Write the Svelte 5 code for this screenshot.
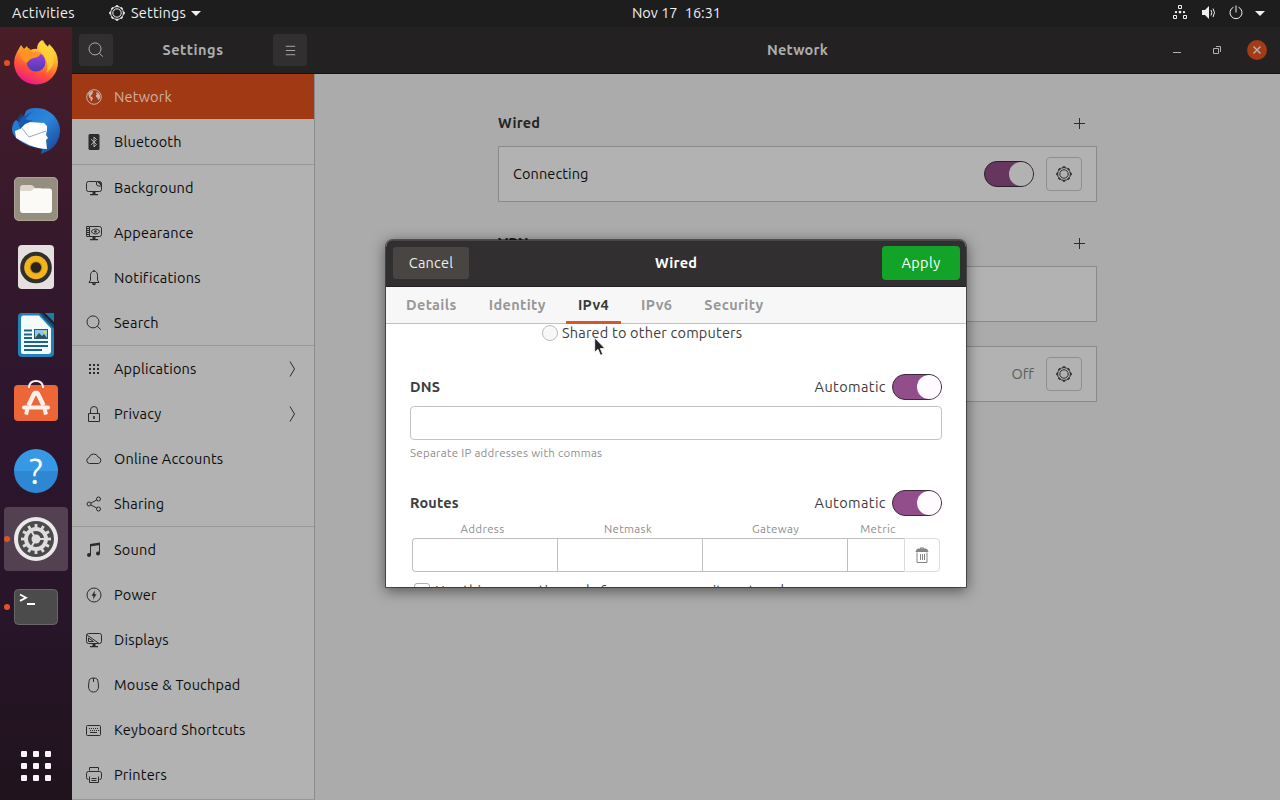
<script>
  // 16x16 symbolic icons: `line` is stroked, `fill` is solid
  const icons = {
    globe: {
      line: 'M8 .7a7.3 7.3 0 1 0 0 14.6A7.3 7.3 0 0 0 8 .7z',
      fill: 'M2.200 4.500 4.400 2.400l2.400-.5.6 1L6.400 4.100l.2 1-1.600 1.200-.4 1.200 1.600.6.8 1.200-.8 1.400-.6 1.800-.9-.8-.2-2.200L3.200 8.600 2.700 7zM10.400 3l2 .8 1.500 2.300.3 2.200-1 2.200-1.200.5-.6-2.200-1.300-.8-.3-1.700 1.200-1.100-.8-1z'
    },
    bluetooth: {
      fill: 'M4 0h8a1.500 1.500 0 0 1 1.500 1.500v13a1.500 1.500 0 0 1-1.500 1.500H4a1.500 1.500 0 0 1-1.500-1.500v-13A1.500 1.500 0 0 1 4 0z',
      light: 'M5 5.200l5.500 5.200L8 13V3l2.500 2.600L5 10.800'
    },
    background: {
      line: 'M10 1.500H2.500a2 2 0 0 0-2 2v6a2 2 0 0 0 2 2h11a2 2 0 0 0 2-2V6M10.500 1.500h3a2 2 0 0 1 2 2V6h-3a2 2 0 0 1-2-2z',
      fill: 'M6.500 12h3v2H12v1.200H4V14h2.500zM11 1.500h2.500l2 2V6z'
    },
    appearance: {
      line: 'M3.500 1.500h10a2 2 0 0 1 2 2v6a2 2 0 0 1-2 2h-10zM.5 1.500h3M.5 3.500h3M.5 5.500h3M.5 7.500h3M.5 9.500h3M.8 11.500h3M5 6.500q4.500-5 9 0q-4.500 5-9 0M.6 1.500v10',
      fill: 'M6.500 12h3v2H12v1.200H4V14h2.500zM9.500 5.200a1.300 1.300 0 1 0 0 2.600 1.300 1.300 0 0 0 0-2.600z'
    },
    bell: {
      line: 'M8 1.200C5.500 1.200 4.500 3.200 4.500 5.500v4.500L3 12.500h10L11.500 10V5.500C11.500 3.200 10.500 1.200 8 1.200z',
      fill: 'M7.300 0h1.400v1.500H7.300zM6 13.200h4a2 2 0 0 1-4 0z'
    },
    search: { line: 'M7 .9a6 6 0 1 0 0 12A6 6 0 0 0 7 .9zM11.300 11.200l3.500 3.400' },
    apps: {
      fill: 'M3 3h2v2H3zM7 3h2v2H7zM11 3h2v2h-2zM3 7h2v2H3zM7 7h2v2H7zM11 7h2v2h-2zM3 11h2v2H3zM7 11h2v2H7zM11 11h2v2h-2z'
    },
    lock: {
      line: 'M2.500 7.500h11v8h-11zM4.500 7.500V4a3.500 3.500 0 0 1 7 0v3.500',
      fill: 'M7.200 10h1.600v3H7.200z'
    },
    cloud: { line: 'M3.500 12.500a3 3 0 0 1-.4-5.900 4.700 4.700 0 0 1 9-.5 3.300 3.300 0 0 1 .4 6.400z' },
    share: {
      line: 'M3 6a2 2 0 1 0 0 4 2 2 0 0 0 0-4zM12.500 1a2 2 0 1 0 0 4 2 2 0 0 0 0-4zM12.500 11a2 2 0 1 0 0 4 2 2 0 0 0 0-4zM4.800 7.200l6-3.300M4.800 8.900l6 3.200'
    },
    music: {
      line: 'M4.500 13V3M13.500 11.500v-10',
      fill: 'M4 2l10-1.500v2.600L4 4.600zM3 11a2 2 0 1 0 0 4 2 2 0 0 0 2-2v-2zM12 9.500a2 2 0 1 0 0 4 2 2 0 0 0 2-2v-2z'
    },
    power: {
      line: 'M8 1a7 7 0 1 0 0 14A7 7 0 0 0 8 1z',
      fill: 'M9 3.500L5.500 8.800h2L7 12.500l3.500-5.300h-2z'
    },
    display: {
      line: 'M2.500 1.500h11a2 2 0 0 1 2 2v6a2 2 0 0 1-2 2h-11a2 2 0 0 1-2-2v-6a2 2 0 0 1 2-2zM.8 2.800l12 8.500M2.500 6v3.500h5z',
      fill: 'M6.500 12h3v2H12v1.200H4V14h2.500z'
    },
    mouse: { line: 'M3 4.500Q3 1 7.500 1T12 4.500L12.500 9q0 6-5 6t-5-6zM7.500 1v4' },
    keyboard: {
      line: 'M1.500 3.500h12a1 1 0 0 1 1 1v8a1 1 0 0 1-1 1h-12a1 1 0 0 1-1-1v-8a1 1 0 0 1 1-1z',
      fill: 'M3 6h1v1H3zM5 6h1v1H5zM7 6h1v1H7zM9 6h1v1H9zM11 6h1v1h-1zM4 8h1v1H4zM6 8h1v1H6zM8 8h1v1H8zM10 8h1v1h-1zM12 8h1v1h-1zM4 10h7v1H4z'
    },
    printer: {
      line: 'M3.500 3.500v-3h9v3M2.500 12.500a2 2 0 0 1-2-2v-4a2 2 0 0 1 2-2h11a2 2 0 0 1 2 2v4a2 2 0 0 1-2 2M3.500 9.500v6h9v-6M5.500 11.500h5M5.500 13.500h5'
    },
    gear: {
      line: 'M8 3.800a4.200 4.200 0 1 0 0 8.400 4.200 4.200 0 0 0 0-8.400zM8 1.600a6.400 6.400 0 1 0 0 12.800A6.400 6.400 0 0 0 8 1.600z',
      fill: 'M7 .2h2l.5 1.500h-3zM7 15.800h2l.5-1.500h-3zM.2 7v2l1.500.5v-3zM15.800 7v2l-1.500.5v-3zM2 3.400 3.400 2l1.400.9-1.900 1.900zM14 3.400 12.600 2l-1.400.9 1.900 1.900zM2 12.600 3.400 14l1.400-.9-1.900-1.900zM14 12.600 12.600 14l-1.400-.9 1.900-1.900z'
    },
    trash: {
      line: 'M3 5.500v10h10v-10M6.500 7v6M8.500 7v6M10.500 7v6M6.500 2V.9h3V2',
      fill: 'M2.500 2.500L4 1.500h8l1.500 1L14.500 5h-13z'
    },
    plus: { line: 'M8.500 3v11M3 8.500h11' },
    menu: { line: 'M3 3.500h10M3 8h10M3 12.500h10' },
    chevron: { line: 'M6 .5l4.500 7.500L6 15.500' },
    network: {
      line: 'M6.500.5h3v3h-3zM1.500 10.500h3v3h-3zM11.500 10.500h3v3h-3z',
      fill: 'M4 5.900a1.200 1.200 0 1 0 0 2.400 1.200 1.200 0 0 0 0-2.400zM8 5.700a1.400 1.400 0 1 0 0 2.800 1.400 1.400 0 0 0 0-2.800zM12 5.900a1.200 1.200 0 1 0 0 2.400 1.200 1.200 0 0 0 0-2.400z'
    },
    volume: {
      line: 'M11 5q1.600 2.500 0 5.500M13 3.500q3 4 0 8.500',
      fill: 'M2 5h3l4-4v13l-4-4H2z'
    },
    shutdown: { line: 'M5.500 2.200a6 6 0 1 0 5 0M8 .5v7' }
  }

  const sidebar = [
    [
      { label: 'Network', icon: 'globe', active: true },
      { label: 'Bluetooth', icon: 'bluetooth' }
    ],
    [
      { label: 'Background', icon: 'background' },
      { label: 'Appearance', icon: 'appearance' },
      { label: 'Notifications', icon: 'bell' },
      { label: 'Search', icon: 'search' }
    ],
    [
      { label: 'Applications', icon: 'apps', more: true },
      { label: 'Privacy', icon: 'lock', more: true },
      { label: 'Online Accounts', icon: 'cloud' },
      { label: 'Sharing', icon: 'share' }
    ],
    [
      { label: 'Sound', icon: 'music' },
      { label: 'Power', icon: 'power' },
      { label: 'Displays', icon: 'display' },
      { label: 'Mouse & Touchpad', icon: 'mouse' },
      { label: 'Keyboard Shortcuts', icon: 'keyboard' },
      { label: 'Printers', icon: 'printer' }
    ]
  ]

  const teeth = [0, 30, 60, 90, 120, 150, 180, 210, 240, 270, 300, 330]
  const tabs = ['Details', 'Identity', 'IPv4', 'IPv6', 'Security']

  let tab = $state('IPv4')
  let wired = $state(true)
  let autoDns = $state(true)
  let autoRoutes = $state(true)
</script>

{#snippet icon(name, size = 16)}
  <svg class="icon" width={size} height={size} viewBox="0 0 16 16">
    {#if icons[name].line}<path class="line" d={icons[name].line} />{/if}
    {#if icons[name].fill}<path class="fill" d={icons[name].fill} />{/if}
    {#if icons[name].light}<path class="light" d={icons[name].light} />{/if}
  </svg>
{/snippet}

{#snippet toggle(on, flip)}
  <button class="switch" class:on aria-label="toggle" onclick={flip}><i class="knob"></i></button>
{/snippet}

<div class="desktop">
  <header class="topbar">
    <span class="activities">Activities</span>
    <span class="app-menu">{@render icon('gear')}<span class="app-name">Settings</span><i class="caret"></i></span>
    <span class="clock">Nov 17&ensp;16:31</span>
    <span class="tray">
      {@render icon('network')}
      {@render icon('volume')}
      {@render icon('shutdown')}
      <i class="caret"></i>
    </span>
  </header>

  <div class="workspace">
    <nav class="dock">
      <div class="app running">
        <svg width="48" height="48" viewBox="0 2 48 48">
          <defs>
            <linearGradient id="fox" x1=".8" y1="0" x2=".35" y2="1">
              <stop offset="0" stop-color="#fff04a" />
              <stop offset=".4" stop-color="#ffa42a" />
              <stop offset=".7" stop-color="#ff5138" />
              <stop offset="1" stop-color="#f0148c" />
            </linearGradient>
            <linearGradient id="orb" x1="0" y1="0" x2="0" y2="1">
              <stop offset="0" stop-color="#a03fe0" />
              <stop offset="1" stop-color="#4d3bb5" />
            </linearGradient>
          </defs>
          <path fill="url(#fox)" d="M5 15 9 8l3 4 3-3 2 5q4-3 8-2 0-6 5-9 2 4 6 7 1-3 1-3 9 8 9 18a22 22 0 0 1-44 1q0-6 3-11z" />
          <circle cx="24" cy="25" r="9.500" fill="url(#orb)" />
          <path fill="#ff951f" d="M9 10l4 3 4-2 3 4 9 1q-1 4-7 5-5 1-7 5-5-2-6-7z" />
          <path fill="#ffd43b" d="M27 13q1-7 4-10 3 6 8 9 4 6 3 13-2 7-8 11 3-7 0-13-2-6-7-10z" opacity=".75" />
        </svg>
      </div>
      <div class="app">
        <svg width="48" height="48" viewBox="0 0 48 48">
          <defs>
            <linearGradient id="bird" x1="0" y1="0" x2="1" y2="1">
              <stop offset="0" stop-color="#1b72c9" />
              <stop offset=".5" stop-color="#2c86dc" />
              <stop offset="1" stop-color="#173d8c" />
            </linearGradient>
          </defs>
          <path fill="url(#bird)" d="M14 4q5-5 18-2 14 6 16 20 0 15-12 22l-7 3 1-5-13-3Q-1 31 0 21q1-6 4-8l3 2q2-5 5-6z" />
          <path fill="#fff" d="M3 24l5-2 5-5 4-2 15 1 3 3 0 4-1 5 2 3-2 2 1 9q-8 0-18-4L4 31z" />
          <path fill="none" stroke="#9eabb8" d="M9 20l8 10 17-6" />
          <path fill="#124a9c" d="M5 12l4-5 4 2 8-5-8 8 8 2-8 3-5 5z" opacity=".7" />
        </svg>
      </div>
      <div class="app">
        <svg width="44" height="44" viewBox="0 0 44 44">
          <rect width="44" height="44" rx="5" fill="#958d7e" />
          <rect x=".5" y=".5" width="43" height="43" rx="4.500" fill="none" stroke="#aaa395" />
          <path fill="#dcd7cc" d="M6 17V11q0-3 3-3h8q2 0 4 3h6v6z" />
          <path fill="#fbfaf6" d="M6 14h10q2 0 4-2.500h15q3 0 3 3V33q0 3-3 3H9q-3 0-3-3z" />
        </svg>
      </div>
      <div class="app">
        <svg width="44" height="44" viewBox="0 0 44 44">
          <rect x="4" width="36" height="44" rx="4" fill="#e6dfdf" />
          <circle cx="22" cy="22.500" r="15.800" fill="#2f2f2f" />
          <circle cx="22" cy="22.500" r="11.800" fill="#f3b51b" />
          <circle cx="22" cy="22.500" r="6.200" fill="#b88717" />
          <circle cx="22" cy="22.500" r="5.200" fill="#262420" />
        </svg>
      </div>
      <div class="app">
        <svg width="44" height="44" viewBox="0 0 44 44">
          <path fill="#2382b4" d="M8 0h19l13 14v26q0 4-4 4H8q-4 0-4-4V4q0-4 4-4z" />
          <path fill="#f5fafc" d="M9 2.500h16l12 13V38q0 3-3 3H9q-2 0-2-2V5q0-2.500 2-2.500z" />
          <path fill="#0b506f" d="M25 0h3l12 12v4z" />
          <path fill="#1482a0" d="M31 0h9v9z" />
          <path stroke="#17678d" stroke-width="2" d="M10 17.500h8M10 21.500h8M10 25h8M10 29h24M10 33h24M10 37h18" />
          <rect x="20.500" y="16.500" width="13" height="9" fill="#8cc9e6" stroke="#225b73" />
          <path fill="#31515a" d="M21 25l4-5 3 3 2-2 3 4z" />
          <circle cx="31" cy="19" r="1.500" fill="#f2cf3e" />
        </svg>
      </div>
      <div class="app">
        <svg width="44" height="46" viewBox="0 2.500 44 46">
          <rect y="7.500" width="44" height="36" rx="4" fill="#ec6637" />
          <path fill="none" stroke="#fff1e9" stroke-width="2" d="M15 10.500V9q1-5.500 7-5.500T29 9v1.500" />
          <path fill="none" stroke="#fff1e9" stroke-width="4.500" d="M14.500 28L20.500 15.500h3L29.500 28" stroke-linejoin="bevel" />
          <path stroke="#fff1e9" stroke-width="4" stroke-linecap="round" d="M10 30h24" />
          <path stroke="#fff1e9" stroke-width="4" d="M13.500 31l-1.500 6M30.500 31l1.500 6" />
        </svg>
      </div>
      <div class="app">
        <span class="help">?</span>
      </div>
      <div class="app running current">
        <svg width="44" height="44" viewBox="0 0 44 44">
          <circle cx="22" cy="22" r="22" fill="#eae8ea" />
          <circle cx="22" cy="22" r="18" fill="#4b4b4b" />
          <g stroke="#dedcdc" stroke-width="2.800">
            {#each teeth as angle}
              <path d="M22 7v5" transform="rotate({angle} 22 22)" />
            {/each}
          </g>
          <circle cx="22" cy="22" r="10" fill="none" stroke="#dedcdc" stroke-width="4" />
          <circle cx="22" cy="22" r="4.500" fill="#dedcdc" />
          <path stroke="#dedcdc" stroke-width="2" d="M22 22l-5-8.500M22 22h10M22 22l-5 8.500" />
        </svg>
      </div>
      <div class="app running">
        <svg width="44" height="44" viewBox="0 0 44 44">
          <rect x=".5" y="4.500" width="43" height="35" rx="4" fill="#4b4b4b" stroke="#696769" />
          <path fill="none" stroke="#fff" stroke-width="1.800" d="M6 9.500l6 3.200-6 3.200M13 19h8" />
        </svg>
      </div>
      <div class="show-apps">
        {#each teeth.slice(0, 9) as _}<i></i>{/each}
      </div>
    </nav>

    <div class="window">
      <div class="titlebar">
        <div class="title-left">
          <button class="tool" aria-label="Search">{@render icon('search')}</button>
          <b>Settings</b>
          <button class="tool" aria-label="Menu">{@render icon('menu', 15)}</button>
        </div>
        <b class="title-main">Network</b>
        <div class="controls">
          <svg width="100" height="20" viewBox="0 0 100 20">
            <path class="ctl" d="M6 12.500h8M46.500 8.500h5v5h-5zM49 6.500h4.500V12" />
            <circle cx="90" cy="10" r="10" fill="#a33b16" />
            <path class="ctl" d="M86.500 6.500l7 7M93.500 6.500l-7 7" stroke-width="1.500" />
          </svg>
        </div>
      </div>

      <div class="panes">
        <aside class="sidebar">
          {#each sidebar as group}
            <ul>
              {#each group as item}
                <li class:active={item.active}>
                  {@render icon(item.icon)}
                  <span>{item.label}</span>
                  {#if item.more}{@render icon('chevron')}{/if}
                </li>
              {/each}
            </ul>
          {/each}
        </aside>

        <main>
          <section>
            <h2><span>Wired</span>{@render icon('plus')}</h2>
            <div class="card">
              <span class="name">Connecting</span>
              {@render toggle(wired, () => (wired = !wired))}
              <button class="gear" aria-label="Options">{@render icon('gear')}</button>
            </div>
          </section>
          <section>
            <h2><span>VPN</span>{@render icon('plus')}</h2>
            <div class="card"><span class="name">Not set up</span></div>
          </section>
          <section class="proxy">
            <div class="card">
              <span class="name">Network Proxy</span>
              <span class="off">Off</span>
              <button class="gear" aria-label="Options">{@render icon('gear')}</button>
            </div>
          </section>
        </main>
      </div>
    </div>
  </div>

  <div class="dialog">
    <div class="dialog-head">
      <button class="cancel">Cancel</button>
      <b>Wired</b>
      <button class="apply">Apply</button>
    </div>
    <div class="tabs">
      {#each tabs as name}
        <button class:selected={tab === name} onclick={() => (tab = name)}>{name}</button>
      {/each}
    </div>
    <div class="form">
      <div class="radio"><i></i><span>Shared to other computers</span></div>

      <div class="row">
        <b>DNS</b><span>Automatic</span>
        {@render toggle(autoDns, () => (autoDns = !autoDns))}
      </div>
      <div class="entry"></div>
      <div class="hint">Separate IP addresses with commas</div>

      <div class="row">
        <b>Routes</b><span>Automatic</span>
        {@render toggle(autoRoutes, () => (autoRoutes = !autoRoutes))}
      </div>
      <div class="routes">
        <small class="address">Address</small><small class="netmask">Netmask</small><small class="gateway">Gateway</small><small class="metric">Metric</small><small></small>
        <div class="cell first"></div>
        <div class="cell"></div>
        <div class="cell"></div>
        <div class="cell"></div>
        <button class="delete" aria-label="Delete">{@render icon('trash')}</button>
      </div>
      <div class="check"><i></i><span>Use this connection only for resources on its network</span></div>
    </div>
  </div>

  <svg class="pointer" width="12" height="20" viewBox="0 0 12 20">
    <path d="M.7.8v14.500l3.300-3 2.500 6 2.300-1-2.500-5.800h4.600z" fill="#242424" stroke="#fff" stroke-width=".8" />
  </svg>
</div>

<style>
  :global(body) {
    margin: 0;
    overflow: hidden;
  }

  .desktop {
    position: relative;
    width: 1280px;
    height: 800px;
    overflow: hidden;
    display: flex;
    flex-direction: column;
    font: 14.5px/20px Ubuntu, "Noto Sans", "Open Sans", sans-serif;
    letter-spacing: .2px;
    color: #0c0c0c;
  }

  button {
    font: inherit;
    letter-spacing: inherit;
    color: inherit;
    padding: 0;
    border: 0;
    background: none;
    box-sizing: border-box;
  }

  ul {
    list-style: none;
    margin: 0;
    padding: 0;
  }

  .icon {
    display: block;
    flex: none;
    color: #2b2b2b;
  }

  .line {
    fill: none;
    stroke: currentColor;
    stroke-width: 1;
  }

  .fill {
    fill: currentColor;
  }

  .light {
    fill: none;
    stroke: #b5b5b5;
    stroke-width: 1;
  }

  /* top bar */
  .topbar {
    height: 27px;
    flex: none;
    box-sizing: border-box;
    padding-bottom: 1px;
    display: grid;
    grid-template-columns: 109px 1fr auto 1fr;
    align-items: center;
    background: #1d1d1d;
    color: #f0f0f0;
  }

  .topbar .icon {
    color: #f0f0f0;
  }

  .activities {
    padding-left: 12px;
    letter-spacing: .35px;
  }

  .app-menu {
    display: flex;
    align-items: center;
    gap: 5px;
  }

  .app-name {
    padding-left: 1px;
  }

  .caret {
    border: 5px solid transparent;
    border-top-color: #f0f0f0;
    border-bottom: 0;
  }

  .clock {
    margin-left: -46px;
    letter-spacing: 0;
    transform: translateX(5px);
  }

  .tray {
    display: flex;
    justify-content: flex-end;
    align-items: center;
    gap: 12px;
    padding-right: 15px;
  }

  .tray .caret {
    margin-left: -1px;
  }

  .workspace {
    flex: 1;
    display: flex;
    min-height: 0;
  }

  /* dock */
  .dock {
    width: 72px;
    flex: none;
    box-sizing: border-box;
    padding: 4px 4px 19px;
    display: flex;
    flex-direction: column;
    gap: 4px;
    background: linear-gradient(#4a1d27, #3b1a2b 18%, #2e162e 45%, #28152a 75%, #20131c);
  }

  .app {
    position: relative;
    height: 64px;
    display: flex;
    align-items: center;
    justify-content: center;
    border-radius: 4px;
  }

  .current {
    background: #534050;
  }

  .running::before {
    content: "";
    position: absolute;
    left: 0;
    top: 29px;
    width: 6px;
    height: 6px;
    border-radius: 50%;
    background: #e05326;
  }

  .help {
    width: 44px;
    height: 44px;
    border-radius: 50%;
    background: linear-gradient(#3799e6 50%, #2e87d2 50%);
    color: #fff;
    font-size: 35px;
    line-height: 44px;
    text-align: center;
  }

  .show-apps {
    margin: auto auto 0;
    display: grid;
    grid-template-columns: repeat(3, 6px);
    gap: 6px;
  }

  .show-apps i {
    height: 6px;
    border-radius: 1px;
    background: #fdf3fa;
  }

  /* settings window */
  .window {
    flex: 1;
    display: flex;
    flex-direction: column;
    min-width: 0;
  }

  .titlebar {
    height: 47px;
    flex: none;
    box-sizing: border-box;
    display: flex;
    align-items: center;
    background: #232121;
    border-bottom: 1px solid #141313;
    color: #adadad;
  }

  .titlebar .icon {
    color: #adadad;
  }

  .title-left {
    width: 243px;
    box-sizing: border-box;
    padding: 0 8px 0 7px;
    display: flex;
    justify-content: space-between;
    align-items: center;
    letter-spacing: .5px;
  }

  .tool {
    width: 34px;
    height: 32px;
    display: grid;
    place-items: center;
    border-radius: 3px;
    background: #312f2f;
  }

  .title-main {
    flex: 1;
    text-align: center;
    padding-left: 119px;
  }

  .controls {
    width: 119px;
    height: 20px;
    display: flex;
    justify-content: flex-end;
    padding-right: 13px;
    box-sizing: border-box;
  }

  .ctl {
    fill: none;
    stroke: #b0b0b0;
  }

  .panes {
    flex: 1;
    display: flex;
    min-height: 0;
  }

  .sidebar {
    width: 243px;
    flex: none;
    box-sizing: border-box;
    background: #b2b2b2;
    border-right: 1px solid #8b8b8b;
    border-bottom: 1px solid #979797;
    overflow: hidden;
  }

  ul + ul {
    border-top: 1px solid #979797;
  }

  li {
    height: 45px;
    display: flex;
    align-items: center;
    gap: 12px;
    padding: 0 14px;
  }

  li span {
    flex: 1;
    padding-top: 1px;
  }

  .active {
    background: #a13915;
    color: #cdb1a6;
  }

  .active .icon {
    color: #cdb1a6;
  }

  main {
    flex: 1;
    padding: 33px 183px 0;
    background: #ababab;
  }

  section {
    height: 120px;
  }

  h2 {
    display: flex;
    justify-content: space-between;
    align-items: center;
    height: 31px;
    margin: 0 10px 8px 0;
    font-size: 14.5px;
    color: #242424;
  }

  .card {
    display: flex;
    align-items: center;
    height: 56px;
    box-sizing: border-box;
    padding: 0 14px;
    gap: 12px;
    background: #b2b2b2;
    border: 1px solid #8a8a8a;
    letter-spacing: .1px;
  }

  .name {
    flex: 1;
  }

  .off {
    color: #5c5c5c;
  }

  .proxy {
    margin-top: -1px;
  }

  .gear {
    width: 36px;
    height: 34px;
    display: grid;
    place-items: center;
    border: 1px solid #8f8f8f;
    border-radius: 4px;
  }

  .switch {
    width: 50px;
    height: 26px;
    flex: none;
    display: flex;
    border: 1px solid #3b2a3a;
    border-radius: 13px;
    background: #aaa;
  }

  .switch.on {
    justify-content: flex-end;
    background: #924d8b;
  }

  .knob {
    width: 24px;
    height: 24px;
    border-radius: 50%;
    background: #fffbff;
  }

  .card .switch {
    background: #66365f;
    border-color: #292029;
  }

  .card .knob {
    background: #b2b2b2;
  }

  /* connection dialog */
  .dialog {
    position: absolute;
    left: 386px;
    top: 240px;
    width: 580px;
    height: 347px;
    display: flex;
    flex-direction: column;
    border-radius: 7px 7px 0 0;
    background: #fff;
    color: #3d3d3d;
    box-shadow: 0 0 0 1px rgba(0, 0, 0, .45), 0 3px 14px 1px rgba(0, 0, 0, .5);
    overflow: hidden;
  }

  .dialog-head {
    height: 47px;
    flex: none;
    box-sizing: border-box;
    padding: 0 6px 1px 7px;
    display: flex;
    align-items: center;
    justify-content: space-between;
    background: #322f30;
    border-bottom: 1px solid #252323;
    border-top: 1px solid #494647;
    color: #fff;
  }

  .dialog-head b {
    padding-left: 1px;
  }

  .cancel {
    width: 76px;
    height: 32px;
    border-radius: 3px;
    background: #484543;
    color: #eee;
  }

  .apply {
    width: 78px;
    height: 34px;
    border-radius: 4px;
    background: #12a328;
    letter-spacing: .4px;
  }

  .tabs {
    height: 37px;
    flex: none;
    box-sizing: border-box;
    padding-left: 8px;
    display: flex;
    background: #f7f7f7;
    border-bottom: 1px solid #c2c2c2;
  }

  .tabs button {
    padding: 0 12px 1px;
    margin-right: 8px;
    height: 37px;
    font-weight: bold;
    letter-spacing: .37px;
    color: #989898;
    border-bottom: 3px solid transparent;
    border-top: 3px solid transparent;
  }

  .tabs .selected {
    color: #3a3a3a;
    border-bottom-color: #d9562a;
  }

  .form {
    flex: 1;
    overflow: hidden;
    padding: 0 24px;
  }

  .radio {
    display: flex;
    align-items: center;
    gap: 4px;
    height: 18px;
    margin: 0 0 31px 132px;
  }

  .radio i {
    width: 14px;
    height: 14px;
    border: 1px solid #bcbcbc;
    border-radius: 50%;
    background: #f8f8f8;
  }

  .row {
    display: flex;
    align-items: center;
    height: 28px;
    gap: 6px;
  }

  .row b {
    flex: 1;
  }

  .row span {
    letter-spacing: .4px;
  }

  .entry {
    height: 34px;
    box-sizing: border-box;
    margin: 5px 0;
    border: 1px solid #c3c3c3;
    border-radius: 4px;
  }

  .hint {
    height: 15px;
    margin-bottom: 29px;
    font-size: 11.5px;
    line-height: 15px;
    letter-spacing: .27px;
    color: #8e8e8e;
  }

  .routes {
    display: grid;
    grid-template-columns: 145px 145px 145px 57px 36px;
    grid-template-rows: 21px 34px;
    margin: 0 2px;
  }

  small {
    font-size: 11.5px;
    line-height: 24px;
    letter-spacing: .35px;
    text-align: center;
    color: #8e8e8e;
  }

  .address {
    padding-right: 4px;
  }

  .netmask {
    padding-right: 3px;
  }

  .gateway {
    padding-left: 2px;
  }

  .metric {
    padding-left: 5px;
  }

  .cell {
    border: 1px solid #c0c0c0;
    border-right: 0;
  }

  .first {
    border-radius: 4px 0 0 4px;
  }

  .delete {
    display: grid;
    place-items: center;
    padding-right: 1px;
    border: 1px solid #dcdcdc;
    border-radius: 0 4px 4px 0;
  }

  .delete .icon {
    color: #858585;
  }

  .check {
    display: flex;
    gap: 5px;
    margin: 11px 0 0 4px;
  }

  .check i {
    width: 14px;
    height: 14px;
    border: 1px solid #b0b0b0;
    border-radius: 3px;
  }

  .check span {
    margin-top: -2px;
    letter-spacing: .17px;
  }

  .pointer {
    position: absolute;
    left: 594px;
    top: 337px;
  }
</style>
